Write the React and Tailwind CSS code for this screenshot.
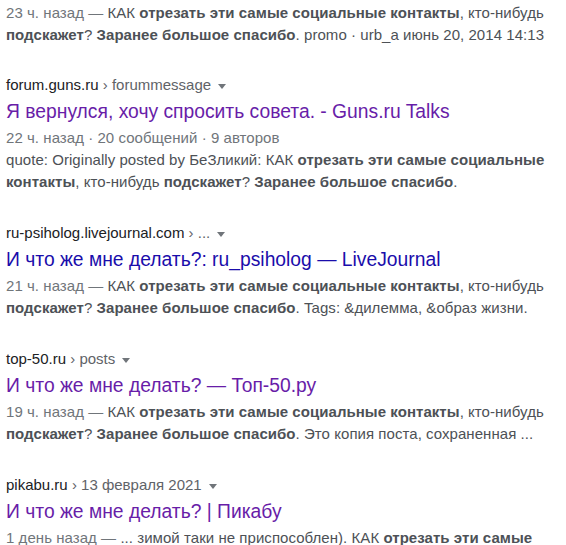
import React from "react";

const B = ({ children }) => <b className="font-bold">{children}</b>;
const D = ({ children }) => <span className="text-[#70757a]">{children}</span>;

function Caret() {
  return (
    <span className="ml-[7px] inline-block h-0 w-0 align-middle border-x-[4px] border-x-transparent border-t-[5px] border-t-[#70757a]" />
  );
}

function Result({ host, path, title, visited = true, children }) {
  return (
    <div className="mb-[30px]">
      <div className="text-[15px] leading-[20px] whitespace-nowrap">
        <span className="text-[#202124]">{host}</span>
        <span className="text-[#5f6368]"> › {path}</span>
        <Caret />
      </div>
      <h3
        className={
          "pt-[4px] mb-[2px] text-[19.3px] leading-[26px] font-normal whitespace-nowrap " +
          (visited ? "text-[#681da8]" : "text-[#1a0dab]")
        }
      >
        {title}
      </h3>
      <div className="text-[15px] leading-[22px] text-[#4d5156] whitespace-nowrap tracking-[0.05px]">{children}</div>
    </div>
  );
}

export default function App() {
  return (
    <div className="min-h-screen bg-white pt-[2px] pl-[6px] font-['Liberation_Sans',Arial,sans-serif] overflow-hidden">
      <div className="mb-[29px] text-[15px] leading-[22px] text-[#4d5156] whitespace-nowrap tracking-[0.05px]">
        <D>23 ч. назад — </D>КАК <B>отрезать эти самые социальные контакты</B>, кто-нибудь
        <br />
        <B>подскажет</B>? <B>Заранее большое спасибо</B>. promo · urb_a июнь 20, 2014 14:13
      </div>

      <Result host="forum.guns.ru" path="forummessage" title="Я вернулся, хочу спросить совета. - Guns.ru Talks">
        <div className="text-[#70757a]">22 ч. назад · 20 сообщений · 9 авторов</div>
        quote: Originally posted by БеЗликий: КАК <B>отрезать эти самые социальные</B>
        <br />
        <B>контакты</B>, кто-нибудь <B>подскажет</B>? <B>Заранее большое спасибо</B>.
      </Result>

      <Result
        host="ru-psiholog.livejournal.com"
        path="..."
        title="И что же мне делать?: ru_psiholog — LiveJournal"
        visited={false}
      >
        <D>21 ч. назад — </D>КАК <B>отрезать эти самые социальные контакты</B>, кто-нибудь
        <br />
        <B>подскажет</B>? <B>Заранее большое спасибо</B>. Tags: &amp;дилемма, &amp;образ жизни.
      </Result>

      <Result host="top-50.ru" path="posts" title="И что же мне делать? — Топ-50.ру">
        <D>19 ч. назад — </D>КАК <B>отрезать эти самые социальные контакты</B>, кто-нибудь
        <br />
        <B>подскажет</B>? <B>Заранее большое спасибо</B>. Это копия поста, сохраненная ...
      </Result>

      <Result host="pikabu.ru" path="13 февраля 2021" title="И что же мне делать? | Пикабу">
        <D>1 день назад — </D>... зимой таки не приспособлен). КАК <B>отрезать эти самые</B>
      </Result>
    </div>
  );
}
